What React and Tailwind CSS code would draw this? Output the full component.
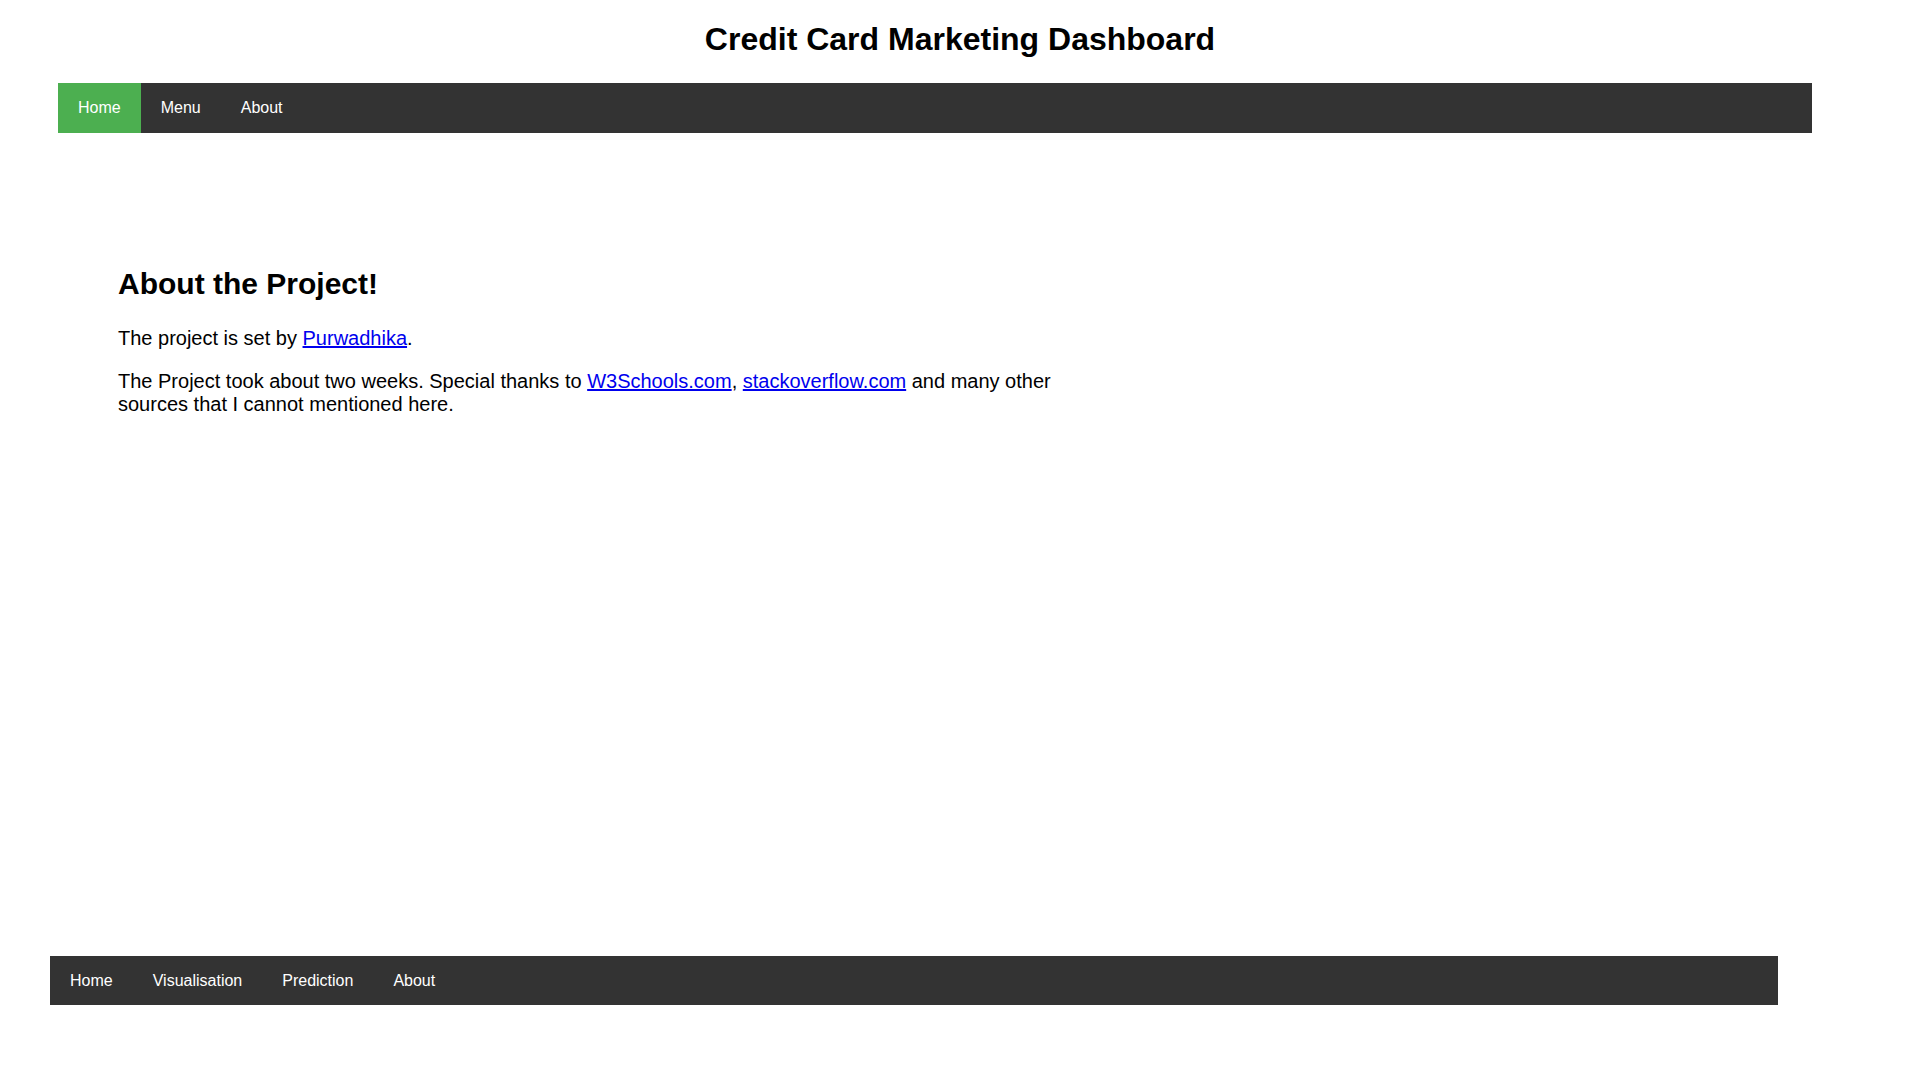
export default function App() {
  const font = { fontFamily: '"Liberation Sans", Arial, sans-serif' };
  return (
    <div className="min-h-[1080px] w-[1920px] bg-white text-black" style={font}>
      <div className="pt-[21px]">
        <h1 className="text-center text-[32px] font-bold leading-[37px]">
          Credit Card Marketing Dashboard
        </h1>
      </div>
      <nav className="ml-[58px] mt-[25px] flex h-[50px] w-[1754px] items-stretch bg-[#333333] text-[16px] text-white">
        <a className="flex items-center bg-[#4CAF50] px-[20px]">Home</a>
        <a className="flex items-center px-[20px]">Menu</a>
        <a className="flex items-center px-[20px]">About</a>
      </nav>
      <main className="h-[823px] pl-[118px] pt-[134px]">
        <div className="w-[960px]">
          <h2 className="text-[30px] font-bold leading-[34px]">About the Project!</h2>
          <p className="mt-[26px] text-[20px] leading-[23px]">
            The project is set by{" "}
            <a className="text-[#0000EE] underline">Purwadhika</a>.
          </p>
          <p className="mt-[20px] text-[20px] leading-[23px]">
            The Project took about two weeks. Special thanks to{" "}
            <a className="text-[#0000EE] underline">W3Schools.com</a>,{" "}
            <a className="text-[#0000EE] underline">stackoverflow.com</a> and many other sources
            that I cannot mentioned here.
          </p>
        </div>
      </main>
      <footer className="ml-[50px] flex h-[49px] w-[1728px] items-stretch bg-[#333333] text-[16px] text-white">
        <a className="flex items-center px-[20px]">Home</a>
        <a className="flex items-center px-[20px]">Visualisation</a>
        <a className="flex items-center px-[20px]">Prediction</a>
        <a className="flex items-center px-[20px]">About</a>
      </footer>
    </div>
  );
}
